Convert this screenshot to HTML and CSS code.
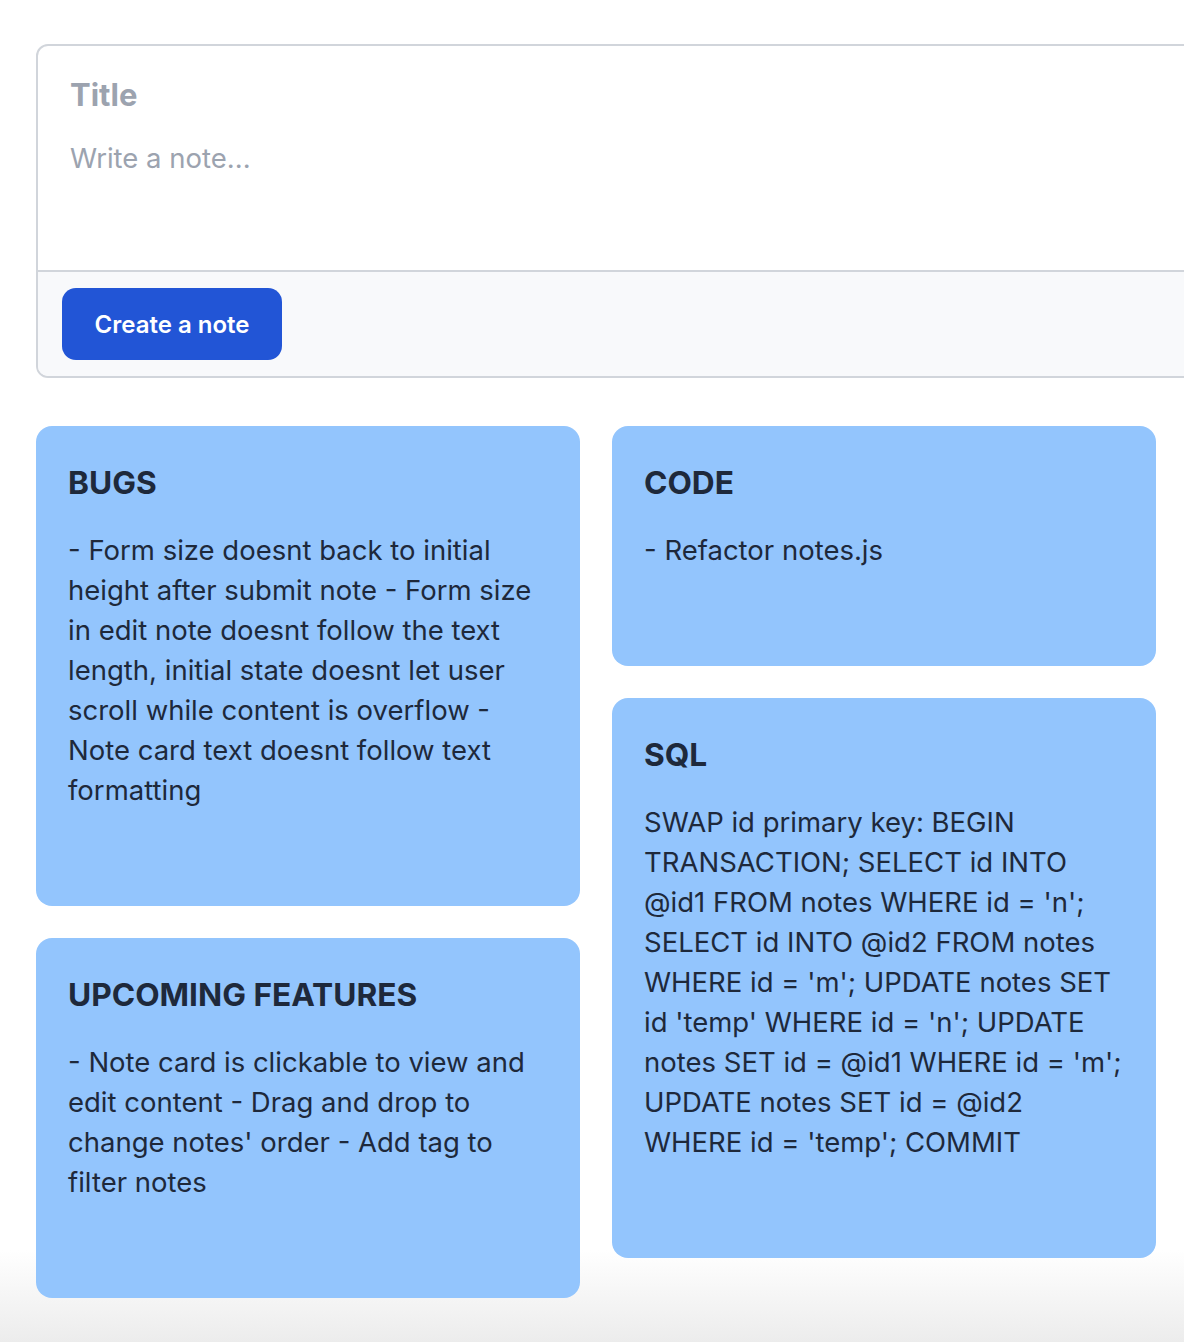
FILE: index.html
```html
<!DOCTYPE html>
<html lang="en">
<head>
<meta charset="utf-8">
<title>Notes</title>
<link rel="stylesheet" href="styles.css">
</head>
<body>
<main class="page">
  <form class="note-form">
    <input class="title-input" type="text" placeholder="Title">
    <textarea class="note-input" placeholder="Write a note..."></textarea>
    <div class="form-footer">
      <button class="create-btn" type="button">Create a note</button>
    </div>
  </form>

  <section class="notes">
    <div class="col">
      <article class="card card-bugs">
        <h2 class="card-title">BUGS</h2>
        <p class="card-body">- Form size doesnt back to initial height after submit note - Form size in edit note doesnt follow the text length, initial state doesnt let user scroll while content is overflow - Note card text doesnt follow text formatting</p>
      </article>
      <article class="card">
        <h2 class="card-title">UPCOMING FEATURES</h2>
        <p class="card-body">- Note card is clickable to view and edit content - Drag and drop to change notes' order - Add tag to filter notes</p>
      </article>
    </div>
    <div class="col">
      <article class="card">
        <h2 class="card-title">CODE</h2>
        <p class="card-body">- Refactor notes.js</p>
      </article>
      <article class="card">
        <h2 class="card-title">SQL</h2>
        <p class="card-body">SWAP id primary key: BEGIN TRANSACTION; SELECT id INTO @id1 FROM notes WHERE id = 'n'; SELECT id INTO @id2 FROM notes WHERE id = 'm'; UPDATE notes SET id 'temp' WHERE id = 'n'; UPDATE notes SET id = @id1 WHERE id = 'm'; UPDATE notes SET id = @id2 WHERE id = 'temp'; COMMIT</p>
      </article>
    </div>
  </section>
</main>
</body>
</html>
```
FILE: styles.css
```css
html {
  overflow: hidden;
  min-height: 1342px;
  background: linear-gradient(to bottom, #ffffff 0, #ffffff 1250px, #ececec 1342px);
}
body {
  margin: 0;
  font-family: Inter, "Noto Sans", sans-serif;
  color: #1f2937;
}
.page {
  padding: 44px 0 0 36px;
}
.note-form {
  width: 1200px;
  border: 2px solid #d1d5db;
  border-radius: 12px;
  overflow: hidden;
  background: #ffffff;
  display: flex;
  flex-direction: column;
}
.title-input,
.note-input {
  display: block;
  box-sizing: border-box;
  width: 100%;
  border: none;
  outline: none;
  background: transparent;
  font-family: Inter, sans-serif;
  padding: 0 32px;
  margin: 0;
}
.title-input {
  margin-top: 24px;
  height: 48px;
  font-size: 31px;
  font-weight: 700;
}
.title-input::placeholder {
  color: #9ca3af;
}
.note-input {
  margin-top: 20px;
  height: 132px;
  font-size: 27.5px;
  line-height: 40px;
  resize: none;
}
.note-input::placeholder {
  color: #9ca3af;
}
.form-footer {
  border-top: 2px solid #d1d5db;
  background: #f8f9fb;
  padding: 16px 24px;
}
.create-btn {
  width: 220px;
  height: 72px;
  border: none;
  border-radius: 14px;
  background: #2255d6;
  color: #ffffff;
  font-family: Inter, sans-serif;
  font-size: 24px;
  font-weight: 600;
}
.notes {
  margin-top: 48px;
  display: flex;
  gap: 32px;
}
.col {
  width: 544px;
  display: flex;
  flex-direction: column;
  gap: 32px;
}
.card {
  background: #93c5fd;
  border-radius: 16px;
  padding: 33px 32px 96px;
}
.card-title {
  margin: 0 0 23px;
  font-size: 31.7px;
  line-height: 48px;
  font-weight: 700;
  color: #1e293b;
}
.card-body {
  margin: 0;
  font-size: 27.5px;
  line-height: 40px;
  color: #1e293b;
}
```
